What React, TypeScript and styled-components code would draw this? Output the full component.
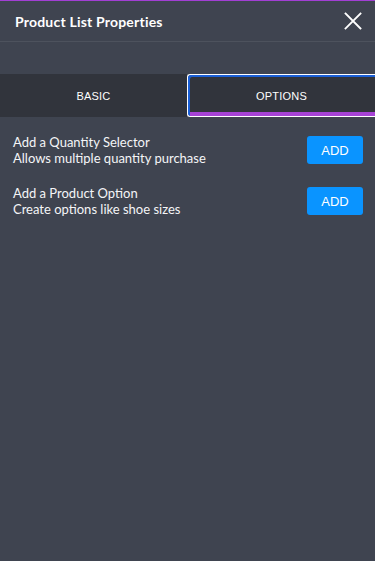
import styled, { createGlobalStyle } from 'styled-components';

const GlobalStyle = createGlobalStyle`
  html, body {
    margin: 0;
    padding: 0;
    background: #3f4450;
  }
  #root {
    min-height: 561px;
  }
`;

interface OptionItem {
  title: string;
  description: string;
}

const options: OptionItem[] = [
  { title: 'Add a Quantity Selector', description: 'Allows multiple quantity purchase' },
  { title: 'Add a Product Option', description: 'Create options like shoe sizes' },
];

const CloseIcon = () => (
  <svg width="18" height="18" viewBox="0 0 18 18" fill="none">
    <path d="M1.5 1.5 L16.5 16.5 M16.5 1.5 L1.5 16.5" stroke="#ffffff" strokeWidth="1.8" strokeLinecap="square" />
  </svg>
);

export default function App() {
  return (
    <>
      <GlobalStyle />
      <Panel>
        <Header>
          <Title>Product List Properties</Title>
          <CloseButton aria-label="Close">
            <CloseIcon />
          </CloseButton>
        </Header>
        <Tabs>
          <Tab>BASIC</Tab>
          <Tab $active>OPTIONS</Tab>
        </Tabs>
        <List>
          {options.map((o) => (
            <Row key={o.title}>
              <RowText>
                <span>{o.title}</span>
                <span>{o.description}</span>
              </RowText>
              <AddButton>ADD</AddButton>
            </Row>
          ))}
        </List>
      </Panel>
    </>
  );
}

const Panel = styled.div`
  width: 375px;
  min-height: 561px;
  background: #3f4450;
  border-top: 1px solid #a23fd4;
  box-sizing: border-box;
  font-family: Lato, 'Open Sans', sans-serif;
  color: #ffffff;
`;

const Header = styled.div`
  height: 40px;
  display: flex;
  align-items: center;
  justify-content: space-between;
  padding: 0 15px;
  border-bottom: 1px solid #4d525d;
`;

const Title = styled.h1`
  margin: 0;
  font-size: 14px;
  font-weight: 700;
  letter-spacing: 0.2px;
`;

const CloseButton = styled.button`
  background: none;
  border: none;
  padding: 0;
  margin-right: -2px;
  display: flex;
  cursor: pointer;
`;

const Tabs = styled.div`
  margin-top: 32px;
  display: grid;
  grid-template-columns: 187px 1fr;
  height: 43px;
`;

const Tab = styled.button<{ $active?: boolean }>`
  background: #31343c;
  border: none;
  color: #ffffff;
  font-family: 'Liberation Sans', Arial, sans-serif;
  font-size: 11px;
  letter-spacing: 0.2px;
  padding: 0;
  box-sizing: border-box;
  ${({ $active }) =>
    $active &&
    `
    border: 1px solid #ffffff;
    border-right: none;
    border-radius: 3px 0 0 3px;
    box-shadow: inset 2px 2px 0 #1a5fd6, inset 0 -4px 0 #a743d6;
  `}
`;

const List = styled.div`
  padding: 17px 12px 0 13px;
  display: flex;
  flex-direction: column;
  gap: 19px;
`;

const Row = styled.div`
  display: flex;
  align-items: center;
  justify-content: space-between;
`;

const RowText = styled.div`
  display: flex;
  flex-direction: column;
  font-size: 13px;
  line-height: 16px;
  color: #f4f5f7;
`;

const AddButton = styled.button`
  width: 56px;
  height: 28px;
  background: #0a94ff;
  border: none;
  border-radius: 3px;
  color: #ffffff;
  font-family: 'Liberation Sans', Arial, sans-serif;
  font-size: 13px;
  padding: 0;
  cursor: pointer;
`;
